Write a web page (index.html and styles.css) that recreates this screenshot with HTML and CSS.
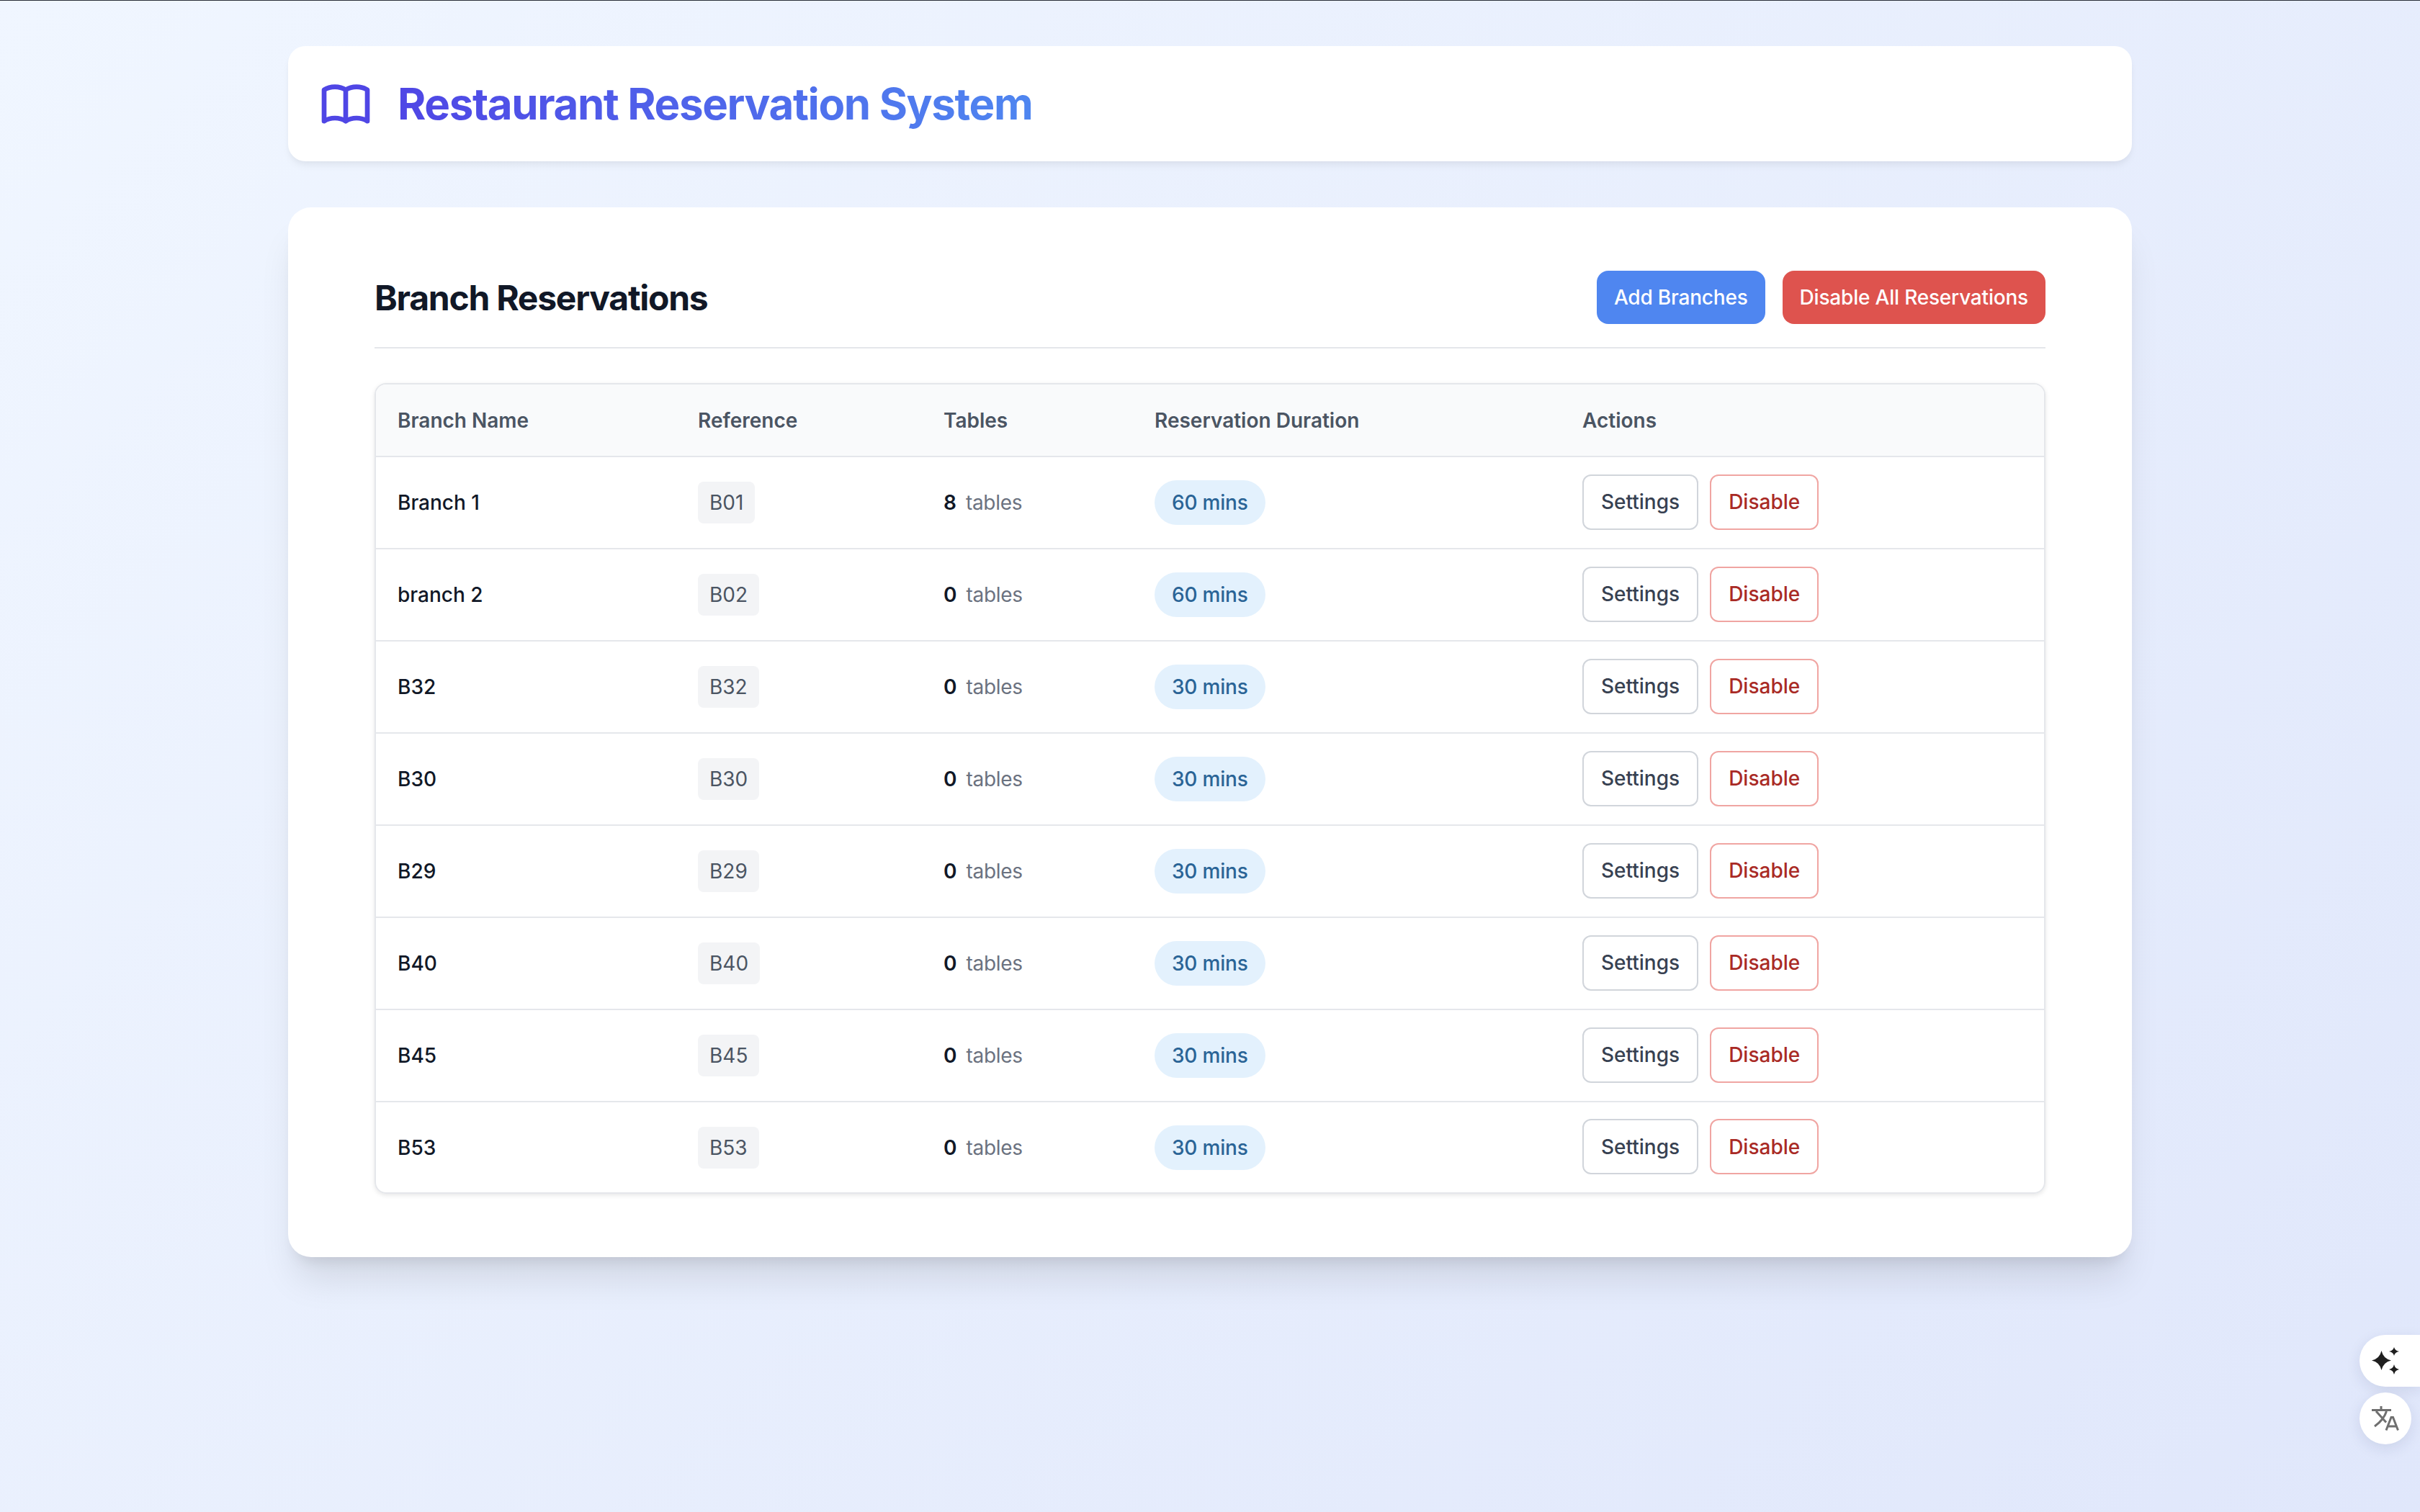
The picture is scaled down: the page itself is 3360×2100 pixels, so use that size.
FILE: index.html
```html
<!DOCTYPE html>
<html lang="en">

<head>
    <meta charset="UTF-8">
    <meta name="viewport" content="width=device-width, initial-scale=1.0">
    <title>Restaurant Reservation System</title>
    <link rel="stylesheet" href="styles.css">
</head>

<body>
    <div class="container">
        <header class="site-header">
            <svg class="logo" viewBox="0 0 24 24" fill="none" stroke="#4f46e5" stroke-width="2" stroke-linecap="round" stroke-linejoin="round">
                <path d="M12 6.253v13m0-13C10.832 5.477 9.246 5 7.5 5S4.168 5.477 3 6.253v13C4.168 18.477 5.754 18 7.5 18s3.332.477 4.5 1.253m0-13C13.168 5.477 14.754 5 16.5 5c1.747 0 3.332.477 4.5 1.253v13C19.832 18.477 18.247 18 16.5 18c-1.746 0-3.332.477-4.5 1.253"/>
            </svg>
            <h1>Restaurant Reservation System</h1>
        </header>

        <main class="panel">
            <div class="panel-head">
                <h2>Branch Reservations</h2>
                <div class="panel-actions">
                    <button class="btn btn-blue" type="button">Add Branches</button>
                    <button class="btn btn-red" type="button">Disable All Reservations</button>
                </div>
            </div>

            <div class="table-wrap">
                <table>
                    <colgroup>
                        <col class="col-name">
                        <col class="col-ref">
                        <col class="col-tables">
                        <col class="col-duration">
                        <col>
                    </colgroup>
                    <thead>
                        <tr>
                            <th>Branch Name</th>
                            <th>Reference</th>
                            <th>Tables</th>
                            <th>Reservation Duration</th>
                            <th>Actions</th>
                        </tr>
                    </thead>
                    <tbody>
                        <tr>
                            <td class="name">Branch 1</td>
                            <td><span class="ref">B01</span></td>
                            <td><b>8</b><span class="unit">tables</span></td>
                            <td><span class="pill">60 mins</span></td>
                            <td><div class="row-actions"><button class="btn-sm" type="button">Settings</button><button class="btn-sm btn-danger" type="button">Disable</button></div></td>
                        </tr>
                        <tr>
                            <td class="name">branch 2</td>
                            <td><span class="ref">B02</span></td>
                            <td><b>0</b><span class="unit">tables</span></td>
                            <td><span class="pill">60 mins</span></td>
                            <td><div class="row-actions"><button class="btn-sm" type="button">Settings</button><button class="btn-sm btn-danger" type="button">Disable</button></div></td>
                        </tr>
                        <tr>
                            <td class="name">B32</td>
                            <td><span class="ref">B32</span></td>
                            <td><b>0</b><span class="unit">tables</span></td>
                            <td><span class="pill">30 mins</span></td>
                            <td><div class="row-actions"><button class="btn-sm" type="button">Settings</button><button class="btn-sm btn-danger" type="button">Disable</button></div></td>
                        </tr>
                        <tr>
                            <td class="name">B30</td>
                            <td><span class="ref">B30</span></td>
                            <td><b>0</b><span class="unit">tables</span></td>
                            <td><span class="pill">30 mins</span></td>
                            <td><div class="row-actions"><button class="btn-sm" type="button">Settings</button><button class="btn-sm btn-danger" type="button">Disable</button></div></td>
                        </tr>
                        <tr>
                            <td class="name">B29</td>
                            <td><span class="ref">B29</span></td>
                            <td><b>0</b><span class="unit">tables</span></td>
                            <td><span class="pill">30 mins</span></td>
                            <td><div class="row-actions"><button class="btn-sm" type="button">Settings</button><button class="btn-sm btn-danger" type="button">Disable</button></div></td>
                        </tr>
                        <tr>
                            <td class="name">B40</td>
                            <td><span class="ref">B40</span></td>
                            <td><b>0</b><span class="unit">tables</span></td>
                            <td><span class="pill">30 mins</span></td>
                            <td><div class="row-actions"><button class="btn-sm" type="button">Settings</button><button class="btn-sm btn-danger" type="button">Disable</button></div></td>
                        </tr>
                        <tr>
                            <td class="name">B45</td>
                            <td><span class="ref">B45</span></td>
                            <td><b>0</b><span class="unit">tables</span></td>
                            <td><span class="pill">30 mins</span></td>
                            <td><div class="row-actions"><button class="btn-sm" type="button">Settings</button><button class="btn-sm btn-danger" type="button">Disable</button></div></td>
                        </tr>
                        <tr>
                            <td class="name">B53</td>
                            <td><span class="ref">B53</span></td>
                            <td><b>0</b><span class="unit">tables</span></td>
                            <td><span class="pill">30 mins</span></td>
                            <td><div class="row-actions"><button class="btn-sm" type="button">Settings</button><button class="btn-sm btn-danger" type="button">Disable</button></div></td>
                        </tr>
                    </tbody>
                </table>
            </div>
        </main>
    </div>

    <div class="float-tools">
        <div class="tool tool-open">
            <svg viewBox="0 0 40 40" width="40" height="40" fill="#1f1f1f">
                <path d="M14.500 6Q17 17 28 19.500 17 22 14.500 33 12 22 1 19.500 12 17 14.500 6z"/>
                <path d="M32 1Q33.200 5.800 39 7 33.200 8.200 32 13 30.800 8.200 25 7 30.800 5.800 32 1z"/>
                <path d="M32 25Q33.200 30.800 39 32 33.200 33.200 32 39 30.800 33.200 25 32 30.800 30.800 32 25z"/>
            </svg>
        </div>
        <div class="tool">
            <svg viewBox="0 0 40 40" width="40" height="40" fill="none" stroke="#6f6f6f" stroke-width="3">
                <path d="M1 8.500h27M14 3v5.500M7 10l14 15.500M21.500 10C19 18 12 26 5 31"/>
                <path d="M21 36.500l7-18h2.500l7 18M23.500 31h12"/>
            </svg>
        </div>
    </div>
</body>

</html>
```

FILE: styles.css
```css
* {
    box-sizing: border-box;
}

html,
body {
    height: 100%;
}

body {
    margin: 0;
    font-family: Inter, "Noto Sans", sans-serif;
    font-size: 28px;
    color: #111827;
    background: linear-gradient(135deg, #f0f6ff, #e0e7fb);
    border-top: 1px solid #2a2f38;
    overflow: hidden;
}

.container {
    width: 2560px;
    margin: 0 auto;
    padding-top: 63px;
}

.site-header {
    display: flex;
    align-items: center;
    gap: 32px;
    height: 160px;
    padding: 0 40px;
    margin-bottom: 64px;
    background: #fff;
    border-radius: 24px;
    box-shadow: 0 8px 12px -2px rgba(0, 0, 0, 0.05), 0 4px 8px -2px rgba(0, 0, 0, 0.03);
}

.logo {
    width: 80px;
    height: 80px;
    flex: none;
}

h1 {
    margin: 0;
    font-size: 60px;
    line-height: 72px;
    font-weight: 700;
    letter-spacing: -1.38px;
    background: linear-gradient(90deg, #4f46e5, #4f86f0);
    background-clip: text;
    -webkit-background-clip: text;
    color: transparent;
}

.panel {
    padding: 88px 120px;
    background: #fff;
    border-radius: 32px;
    box-shadow: 0 40px 50px -10px rgba(0, 0, 0, 0.1), 0 16px 20px -12px rgba(0, 0, 0, 0.1);
}

.panel-head {
    display: flex;
    align-items: center;
    justify-content: space-between;
    padding-bottom: 32px;
    margin-bottom: 48px;
    border-bottom: 2px solid #e5e7eb;
}

h2 {
    margin: 0;
    font-size: 48px;
    font-weight: 700;
    letter-spacing: -1.25px;
    color: #111827;
}

.panel-actions {
    display: flex;
    gap: 24px;
}

.btn {
    height: 74px;
    padding: 0 24px;
    border: none;
    border-radius: 16px;
    font-family: inherit;
    font-size: 28px;
    font-weight: 500;
    letter-spacing: -0.2px;
    color: #fff;
}

.btn-blue {
    background: #4f86f0;
}

.btn-red {
    background: #de534e;
}

.table-wrap {
    border: 2px solid #e5e7eb;
    border-radius: 16px;
    overflow: hidden;
    box-shadow: 0 2px 6px rgba(0, 0, 0, 0.1);
}

table {
    width: 100%;
    border-collapse: collapse;
    table-layout: fixed;
}

.col-name {
    width: 415px;
}

.col-ref {
    width: 341px;
}

.col-tables {
    width: 293px;
}

.col-duration {
    width: 594px;
}

th {
    height: 100px;
    padding: 0 32px;
    text-align: left;
    font-weight: 600;
    color: #4b5563;
    background: #f9fafb;
    border-bottom: 2px solid #e5e7eb;
}

td {
    height: 128px;
    padding: 0 32px;
    border-bottom: 2px solid #e5e7eb;
}

th:first-child,
td:first-child {
    padding-left: 30px;
}

tbody tr:last-child td {
    height: 126px;
    border-bottom: none;
}

.name {
    font-weight: 500;
}

.ref {
    display: inline-block;
    padding: 8px 16px;
    line-height: 42px;
    color: #4b5563;
    background: #f3f4f6;
    border-radius: 8px;
}

b {
    font-weight: 600;
}

.unit {
    margin-left: 13px;
    letter-spacing: -0.3px;
    color: #6b7280;
}

.pill {
    display: inline-block;
    padding: 10px 24px;
    line-height: 42px;
    font-weight: 500;
    letter-spacing: -0.2px;
    color: #2a6496;
    background: #e3f1fd;
    border-radius: 32px;
}

.row-actions {
    display: flex;
    gap: 16px;
    margin-bottom: 2px;
}

.btn-sm {
    height: 77px;
    padding: 0 24px;
    font-family: inherit;
    font-size: 28px;
    font-weight: 500;
    color: #374151;
    background: #fff;
    border: 2px solid #d1d5db;
    border-radius: 12px;
}

.btn-danger {
    color: #a92a25;
    border-color: #f0a5a2;
}

.float-tools {
    position: fixed;
    top: 1854px;
    right: 0;
    display: flex;
    flex-direction: column;
    align-items: flex-end;
    gap: 8px;
}

.tool {
    display: flex;
    align-items: center;
    justify-content: center;
    width: 72px;
    height: 72px;
    margin-right: 12px;
    background: #fff;
    border-radius: 36px;
    box-shadow: 0 6px 20px rgba(30, 40, 90, 0.1);
}

.tool-open {
    width: 84px;
    margin-right: 0;
    padding-right: 12px;
    border-radius: 36px 0 0 36px;
}
```
